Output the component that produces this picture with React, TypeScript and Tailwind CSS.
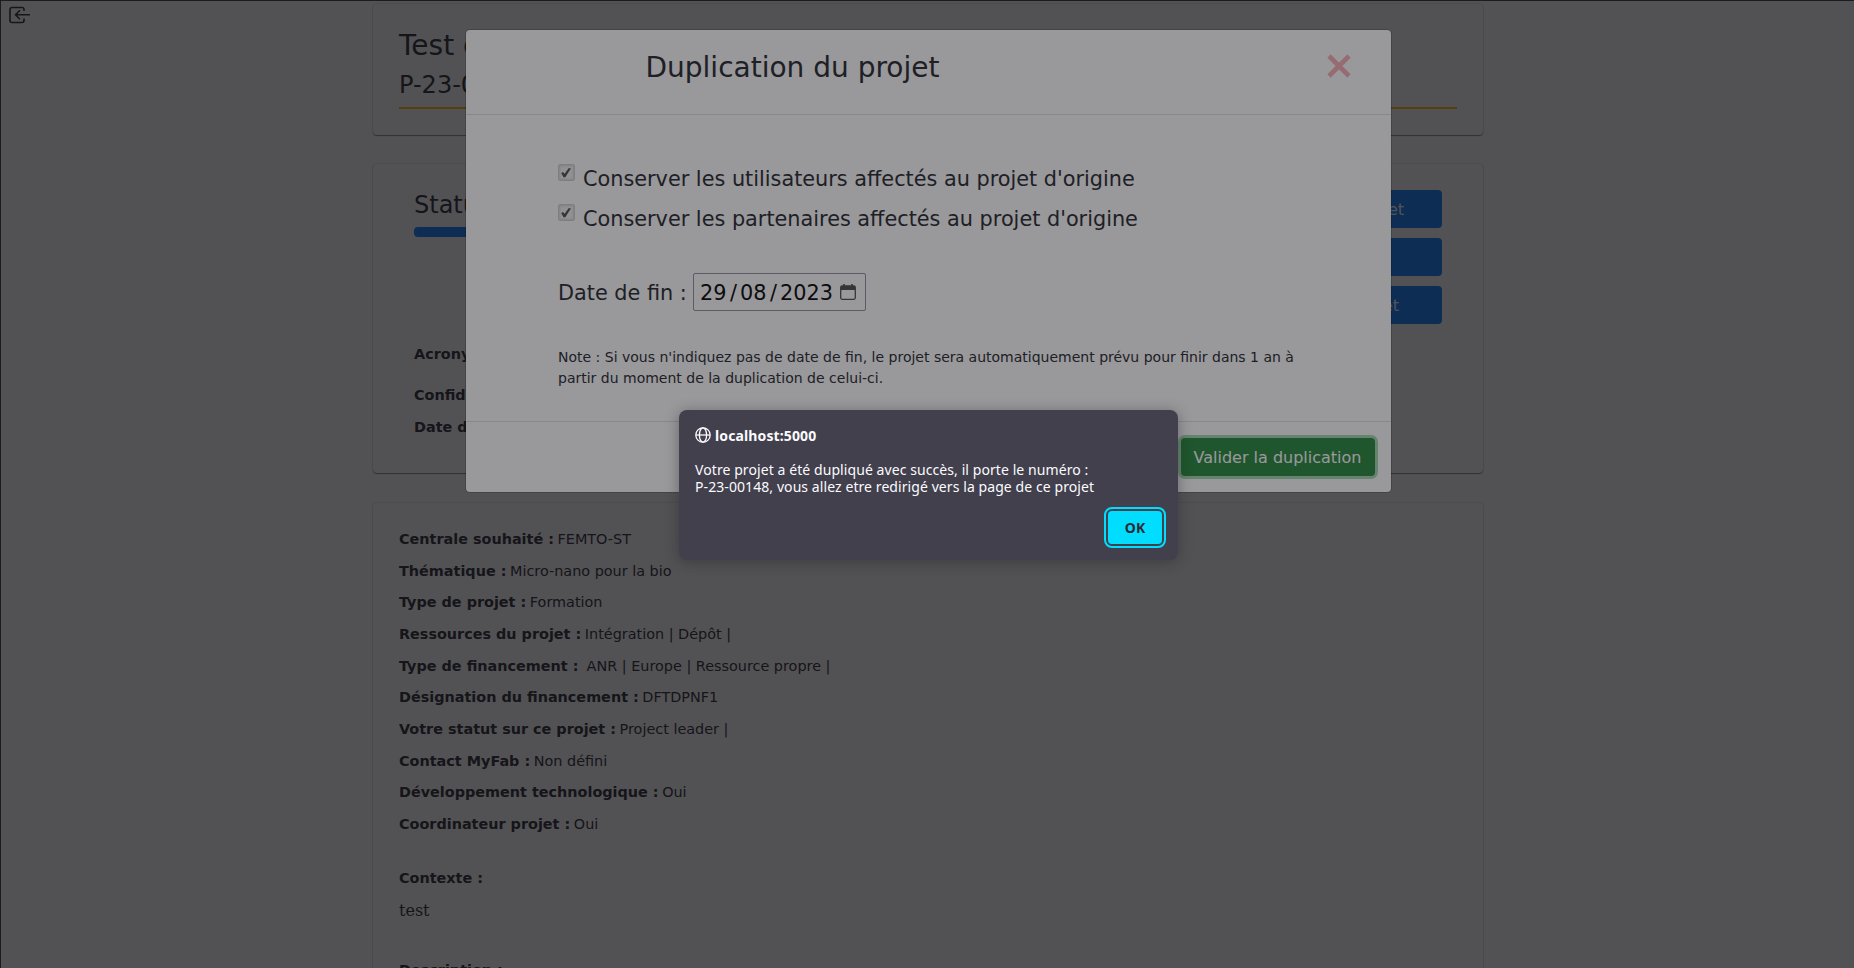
import React from "react";

const details: [string, string][] = [
  ["Centrale souhaité :", "FEMTO-ST"],
  ["Thématique :", "Micro-nano pour la bio"],
  ["Type de projet :", "Formation"],
  ["Ressources du projet :", "Intégration | Dépôt |"],
  ["Type de financement :", "\u00a0ANR | Europe | Ressource propre |"],
  ["Désignation du financement :", "DFTDPNF1"],
  ["Votre statut sur ce projet :", "Project leader |"],
  ["Contact MyFab :", "Non défini"],
  ["Développement technologique :", "Oui"],
  ["Coordinateur projet :", "Oui"],
];

const card =
  "w-[1110px] rounded bg-white shadow-[0_1px_1px_0_rgba(0,0,0,0.45),0_0_2px_0_rgba(0,0,0,0.3)]";

function PageButton({ label }: { label: string }) {
  return (
    <button className="flex h-[38px] w-[196px] items-center justify-end rounded bg-[#007bff] pt-0.5 pr-[38px] text-base text-white">
      {label}
    </button>
  );
}

function ProjectPage() {
  return (
    <div className="flex h-full flex-col items-center overflow-hidden pt-1 pl-0.5">
      <section className={card + " h-[131px] shrink-0 px-[26px] pt-[25px]"}>
        <h1 className="text-[28px] leading-[34px]">Test de projet</h1>
        <h2 className="mt-2 text-2xl leading-[29px]">P-23-00147</h2>
        <div className="mt-[7px] h-0.5 bg-[#ffb700]" />
      </section>

      <section className={card + " mt-[29px] flex h-[309px] shrink-0 justify-between px-[41px] pt-[26px]"}>
        <div className="w-[500px]">
          <h2 className="pt-px text-2xl leading-[29px]">Statut du projet</h2>
          <div className="mt-[7px] h-2.5 rounded bg-[#007bff]" />
          <div className="mt-[106px] text-[14.4px] leading-[22px] font-bold">
            <p>Acronyme :</p>
            <p className="mt-[19px]">Confidentiel :</p>
            <p className="mt-[10px]">Date de fin :</p>
          </div>
        </div>
        <div className="flex flex-col gap-2.5">
          <PageButton label="Modifier projet" />
          <PageButton label="" />
          <div className="[&>button]:pr-[43px]">
            <PageButton label="Dupliquer projet" />
          </div>
        </div>
      </section>

      <section className={card + " mt-[30px] h-[600px] shrink-0 px-[26px] pt-[26px]"}>
        <div className="flex flex-col gap-[10px] text-[14.4px] leading-[21.67px]">
          {details.map(([name, value]) => (
            <p key={name}>
              <b>{name}</b> <span className="-ml-px">{value}</span>
            </p>
          ))}
        </div>
        <p className="mt-[32px] text-[14.4px] leading-[21.6px] font-bold">Contexte :</p>
        <p className="mt-[10px] font-['DejaVu_Serif',serif] text-base leading-6">test</p>
        <p className="mt-[37px] text-[14.4px] leading-[21.6px] font-bold">Description :</p>
      </section>
    </div>
  );
}

function CheckRow({ label }: { label: string }) {
  return (
    <label className="flex h-10 items-start gap-2">
      <span className="mt-[5px] flex size-[17px] items-start rounded-[2px] border border-[#d0d0d0] bg-[#f0f0f0] pt-[3px] pl-[2px] shadow-[inset_0_0_2px_1px_rgba(0,0,0,0.12)]">
        <svg viewBox="0 0 10 10" className="size-[10px] fill-[#484848]">
          <path d="M0.2 5.1 2.2 4 3.5 5.9 7.6 0.2H10L4.300 9.300H2.500Z" />
        </svg>
      </span>
      <span className="text-[20.8px] leading-10">{label}</span>
    </label>
  );
}

function DuplicationModal() {
  return (
    <div className="absolute top-[30px] left-[466px] flex h-[462px] w-[925px] flex-col rounded bg-white shadow-[0_0_0_1px_rgba(0,0,0,0.2)]">
      <header className="flex h-[85px] shrink-0 items-start justify-between border-b border-[#dee2e6] pr-10 pl-[179.5px]">
        <h2 className="pt-[21px] text-[28px] leading-[34px]">Duplication du projet</h2>
        <svg viewBox="0 0 24 24" className="mt-6 size-6 stroke-[#f9b0b5] stroke-[4.6]">
          <path d="M2 2 22 22M22 2 2 22" />
        </svg>
      </header>
      <div className="h-[306px] shrink-0 px-[92px] pt-[44px]">
        <CheckRow label="Conserver les utilisateurs affectés au projet d'origine" />
        <CheckRow label="Conserver les partenaires affectés au projet d'origine" />
        <div className="mt-[34px] flex h-[38px] items-center text-[20.8px] leading-[38px]">
          <span className="w-[135px] pt-0.5">Date de fin :</span>
          <div className="flex h-[38px] w-[173px] items-center rounded-[2px] border border-[#8f8f9d] pl-[6px] text-black">
            <span className="w-[30px] pt-0.5">29</span>
            <span className="w-[10px] pt-0.5">/</span>
            <span className="w-[30px] pt-0.5">08</span>
            <span className="w-[10px] pt-0.5">/</span>
            <span className="w-[60px] pt-0.5">2023</span>
            <svg viewBox="0 0 16 16" className="size-4 fill-none stroke-[#4a4a4a]">
              <rect x="0.7" y="2" width="14.6" height="13.3" rx="1.5" strokeWidth="1.3" />
              <path d="M1 4H15" strokeWidth="4" />
              <path d="M4 0V3M12 0V3" strokeWidth="1.6" />
            </svg>
          </div>
        </div>
        <p className="mt-9 text-sm leading-[21px] whitespace-nowrap">
          Note : Si vous n'indiquez pas de date de fin, le projet sera automatiquement prévu pour finir dans 1 an à
          <br />
          partir du moment de la duplication de celui-ci.
        </p>
      </div>
      <footer className="flex h-[71px] items-start justify-end border-t border-[#dee2e6] pt-4 pr-4">
        <button className="h-[38px] w-[194px] rounded bg-[#218838] pt-px pr-px text-base text-white shadow-[0_0_0_3px_rgba(72,180,97,0.5)]">
          Valider la duplication
        </button>
      </footer>
    </div>
  );
}

function AlertDialog() {
  return (
    <div className="absolute top-[410px] left-[679px] h-[150px] w-[499px] rounded-lg bg-[#42404d] pt-[17px] pr-3 pl-4 font-['Noto_Sans',sans-serif] text-[#fbfbfe] shadow-[0_2px_14px_rgba(30,30,36,0.4)]">
      <div className="flex h-4 items-center gap-1 text-[14px] font-bold tracking-[0.12px]">
        <svg viewBox="0 0 16 16" className="size-4 fill-none stroke-[#fbfbfe] stroke-[1.3]">
          <circle cx="8" cy="8" r="7.2" />
          <ellipse cx="8" cy="8" rx="3.6" ry="7.2" />
          <path d="M1 8H15" />
        </svg>
        <span>localhost:5000</span>
      </div>
      <p className="mt-[18px] text-[14px] leading-[17px] tracking-[0.08px] whitespace-nowrap">
        <span>Votre projet a été dupliqué avec succès, il porte le numéro :</span>
        <br />
        <span>P-23-00148, vous allez etre redirigé vers la page de ce projet</span>
      </p>
      <div className="mt-[12px] flex justify-end">
        <button className="h-[41px] w-[62px] rounded-lg border-2 border-[#00ddff] p-0.5 text-[14px] font-bold text-[#2b2a33]">
          <span className="flex h-full items-center justify-center rounded bg-[#00ddff]">OK</span>
        </button>
      </div>
    </div>
  );
}

export default function App() {
  return (
    <div className="relative h-[968px] w-[1854px] overflow-hidden bg-white font-['DejaVu_Sans',sans-serif] text-[#212529]">
      <ProjectPage />
      <svg viewBox="0 0 24 24" className="absolute top-1 left-[7px] size-6 fill-none stroke-[#212529] stroke-[1.6]">
        <path d="M17 7V5.5A2 2 0 0 0 15 3.5H5A2 2 0 0 0 3 5.5V16.500A2 2 0 0 0 5 18.500H15A2 2 0 0 0 17 16.500V14.500" />
        <path d="M23 10.700H9M13 6.200 8.500 10.700 13 15.200" />
      </svg>
      <div className="absolute inset-0 bg-black/50" />
      <DuplicationModal />
      <div className="absolute inset-0 bg-[#1c1b22]/45" />
      <div className="absolute inset-0 border-t border-l border-[#1c1b22]" />
      <AlertDialog />
    </div>
  );
}
